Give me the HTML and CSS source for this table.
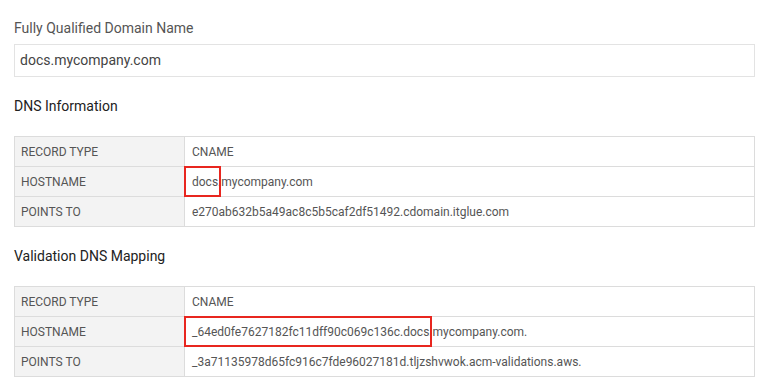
FILE: index.html
```html
<!DOCTYPE html>
<html>
<head>
<meta charset="utf-8">
<link rel="stylesheet" href="styles.css">
</head>
<body>
<div class="page">
  <div class="field-label">Fully Qualified Domain Name</div>
  <div class="input">docs.mycompany.com</div>

  <div class="section-title">DNS Information</div>
  <table class="dns">
    <tr><td class="key">RECORD TYPE</td><td class="val"><div class="cell">CNAME</div></td></tr>
    <tr><td class="key">HOSTNAME</td><td class="val"><div class="cell hlrow"><span class="hl">docs</span><span class="rest">.mycompany.com</span></div></td></tr>
    <tr><td class="key">POINTS TO</td><td class="val"><div class="cell">e270ab632b5a49ac8c5b5caf2df51492.cdomain.itglue.com</div></td></tr>
  </table>

  <div class="section-title second">Validation DNS Mapping</div>
  <table class="dns">
    <tr><td class="key">RECORD TYPE</td><td class="val"><div class="cell">CNAME</div></td></tr>
    <tr><td class="key">HOSTNAME</td><td class="val"><div class="cell hlrow"><span class="hl">_64ed0fe7627182fc11dff90c069c136c.docs</span><span class="rest">.mycompany.com.</span></div></td></tr>
    <tr><td class="key">POINTS TO</td><td class="val"><div class="cell">_3a71135978d65fc916c7fde96027181d.tljzshvwok.acm-validations.aws.</div></td></tr>
  </table>
</div>
</body>
</html>
```
FILE: styles.css
```css
* { box-sizing: border-box; }
html, body { margin: 0; padding: 0; background: #fff; }
body { font-family: Roboto, "Liberation Sans", sans-serif; color: #555; }
.page { padding: 18px 9px 0 14px; width: 764px; }
.field-label { font-size: 14px; line-height: 20px; color: #555; }
.input {
  margin-top: 6px;
  height: 33px;
  border: 1px solid #e3e3e3;
  padding: 0 0 0 5px;
  font-size: 14px;
  line-height: 31px;
  color: #444;
}
.section-title { margin-top: 19px; font-size: 14px; line-height: 20px; color: #222; }
.section-title.second { margin-top: 19px; }
.dns {
  margin-top: 20px;
  width: 741px;
  border-collapse: collapse;
  font-size: 12px;
  color: #555;
}
.dns td { border: 1px solid #dcdcdc; height: 30px; padding: 0; }
.dns td.key { width: 170px; background: #f3f3f3; padding-left: 6px; }
.cell { height: 29px; display: flex; align-items: center; padding-left: 7px; white-space: nowrap; }
.cell.hlrow { padding-left: 0; align-items: stretch; }
.hl {
  position: relative;
  z-index: 1;
  display: flex;
  align-items: center;
  border: 2px solid #e8261f;
  margin: -1px 0 -1px -1px;
  padding: 0 1px 0 6px;
}
.rest { display: flex; align-items: center; margin-left: -3px; }
```
